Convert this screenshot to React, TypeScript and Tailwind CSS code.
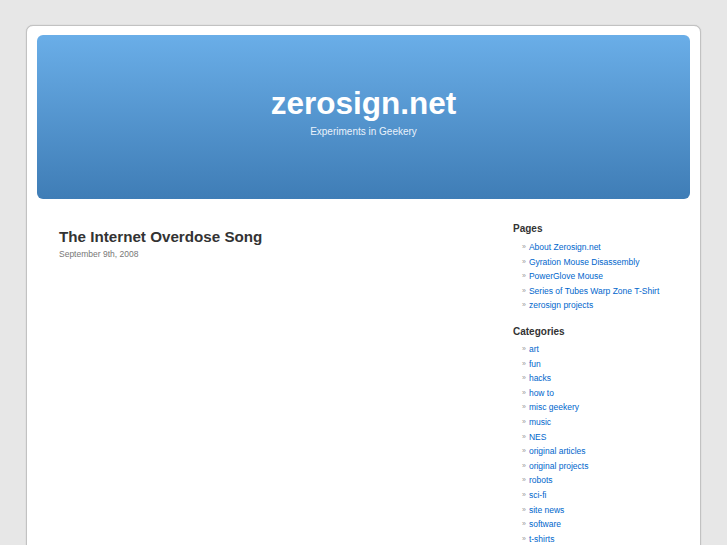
const pages = [
    'About Zerosign.net',
    'Gyration Mouse Disassembly',
    'PowerGlove Mouse',
    'Series of Tubes Warp Zone T-Shirt',
    'zerosign projects',
];

const categories = [
    'art',
    'fun',
    'hacks',
    'how to',
    'misc geekery',
    'music',
    'NES',
    'original articles',
    'original projects',
    'robots',
    'sci-fi',
    'site news',
    'software',
    't-shirts',
];

function LinkList({ items, className }: { items: string[]; className: string }) {
    return (
        <ul className={className}>
            {items.map((item) => (
                <li key={item} className="flex items-center pl-[9px] text-[8.5px] leading-[14.6px]">
                    <span className="mr-[3px] text-[7px] text-[#9a9a9a]">»</span>
                    <a href="#" className="text-[#0066cc]">{item}</a>
                </li>
            ))}
        </ul>
    );
}

export default function App() {
    return (
        <div className="h-[545px] overflow-hidden bg-[#e7e7e7] pt-[25px] font-['Liberation_Sans',Arial,sans-serif]">
            <div className="ml-[26px] h-[600px] w-[675px] rounded-t-[7px] border border-[#c2c2c2] bg-white px-[10px] pt-[9px] shadow-[0_0_1px_rgba(0,0,0,0.25)]">
                {/* Header */}
                <div className="flex h-[164px] flex-col items-center rounded-[6px] bg-gradient-to-b from-[#6aaee8] to-[#3f7db6] text-white">
                    <h1 className="mt-[50px] text-[31.5px] font-bold leading-[36px]">zerosign.net</h1>
                    <p className="mt-[5px] text-[10px] leading-[12px] text-[#eaf2fb]">Experiments in Geekery</p>
                </div>

                <div className="grid grid-cols-[476px_1fr]">
                    {/* Content */}
                    <div className="pl-[22px] pt-[28px]">
                        <h2 className="text-[15.2px] font-bold leading-[20px] text-[#333]">The Internet Overdose Song</h2>
                        <p className="mt-[1px] text-[8.5px] leading-[12px] text-[#777]">September 9th, 2008</p>
                    </div>

                    {/* Sidebar */}
                    <div className="pt-[23px]">
                        <h3 className="text-[10px] font-bold leading-[14px] text-[#333]">Pages</h3>
                        <LinkList items={pages} className="mt-[4px]" />
                        <h3 className="mt-[12px] text-[10px] font-bold leading-[14px] text-[#333]">Categories</h3>
                        <LinkList items={categories} className="mt-[3px]" />
                    </div>
                </div>
            </div>
        </div>
    );
}
